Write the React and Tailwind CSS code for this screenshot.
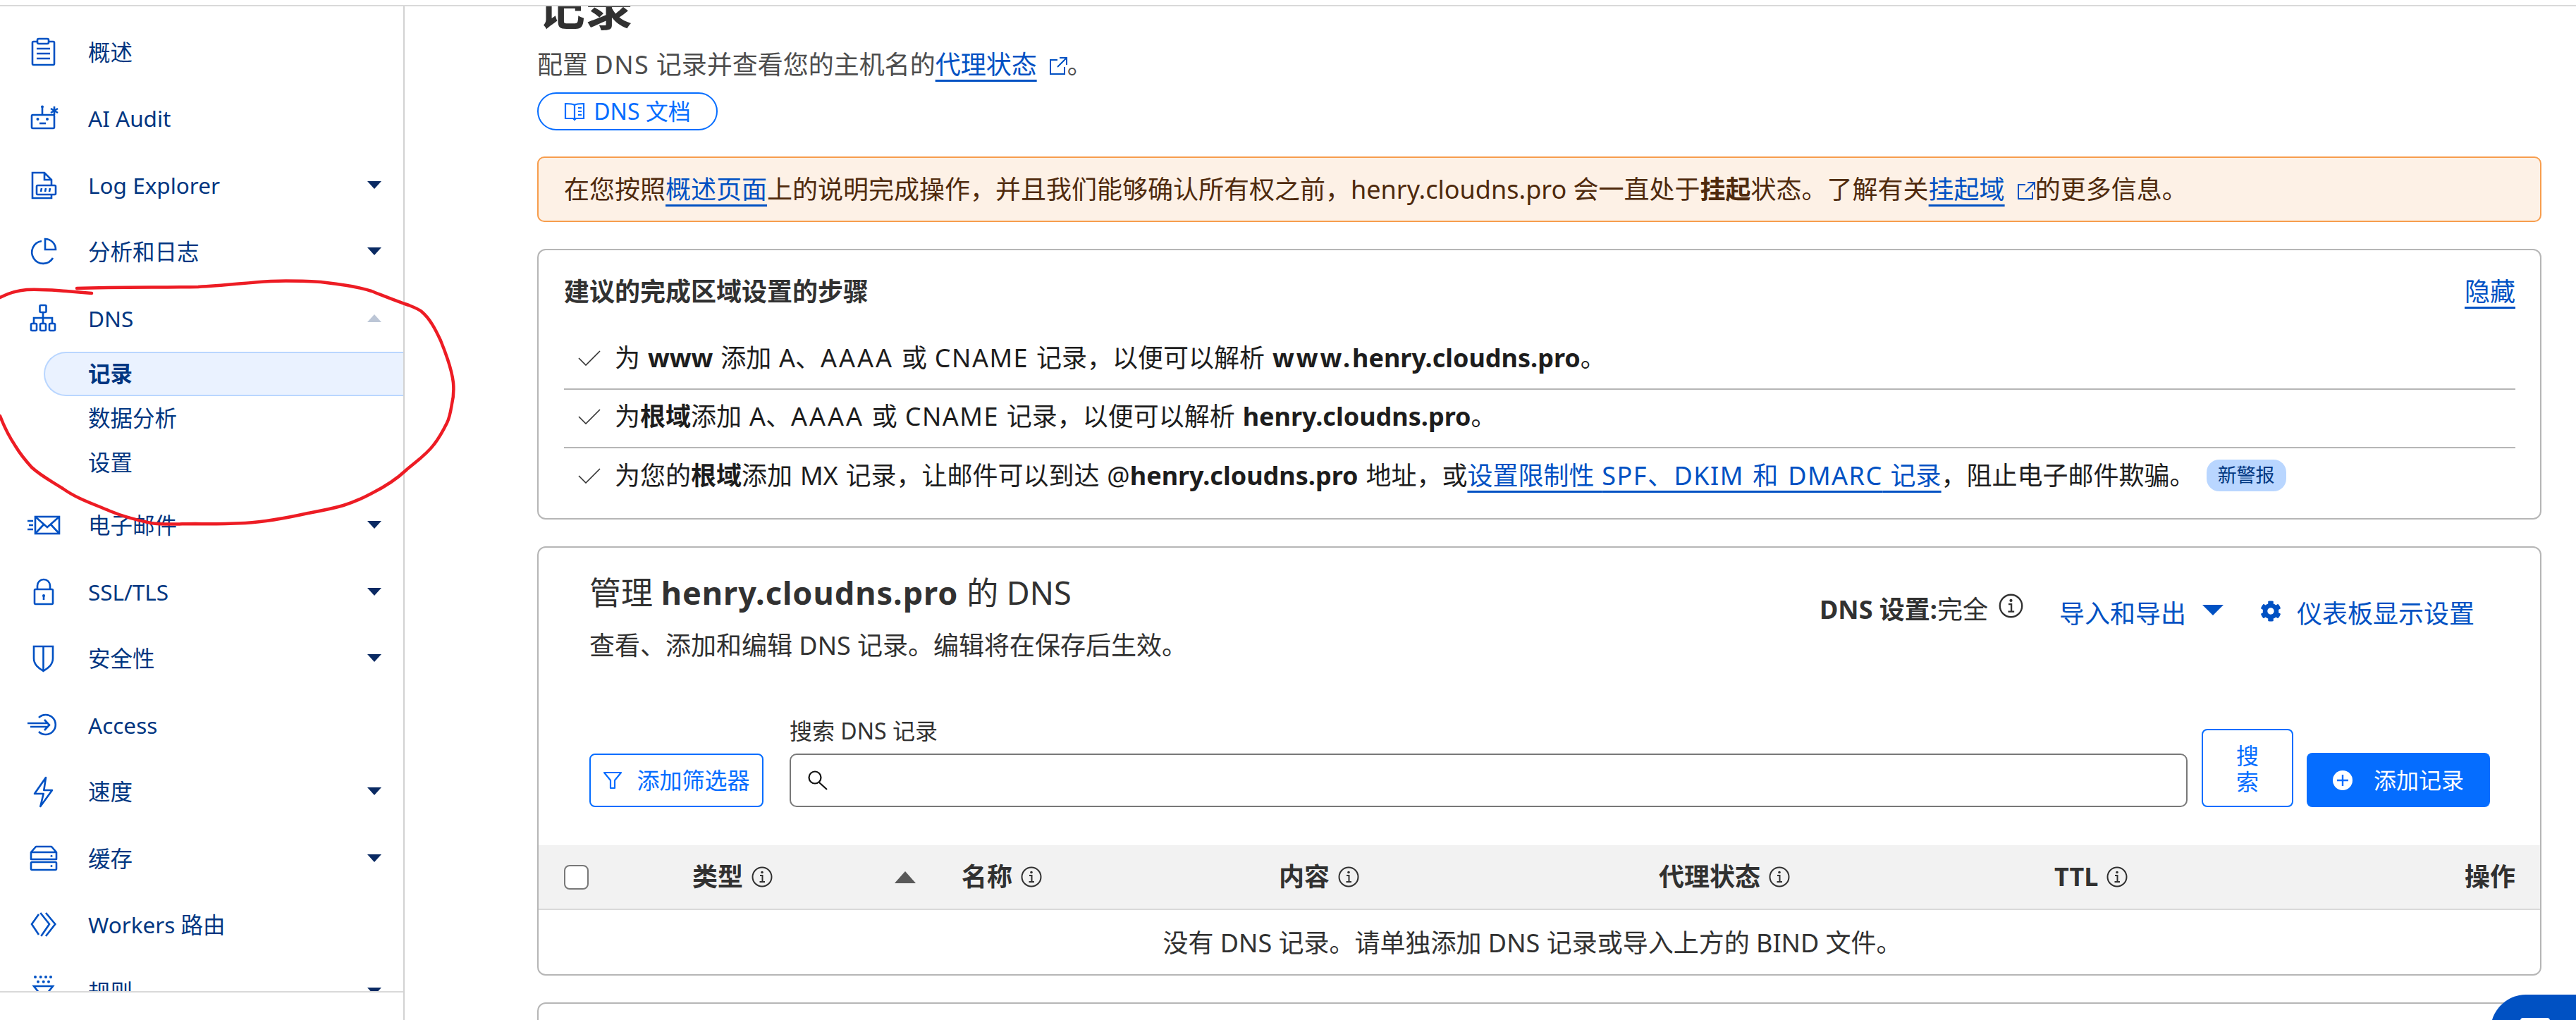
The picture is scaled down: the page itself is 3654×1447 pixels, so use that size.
import { FaCog } from 'react-icons/fa';

const Glyph = ({ children, className = 'w-10 h-10 text-[#0051c3]' }) => (
  <svg viewBox="0 0 40 40" fill="none" stroke="currentColor" strokeWidth="2.6" className={`${className} overflow-visible shrink-0`}>
    {children}
  </svg>
);

const navIcons = {
  overview: (
    <>
      <rect x="5" y="6" width="31" height="33" rx="1.5" />
      <rect x="12" y="2" width="16" height="7" rx="2" fill="#fff" />
      <path d="M11 16H30M11 23H30M11 30H30" />
    </>
  ),
  audit: (
    <>
      <rect x="4" y="15" width="32" height="19" rx="1.5" />
      <path d="M19 15V5" />
      <circle cx="19" cy="3.5" r="2" fill="currentColor" stroke="none" />
      <circle cx="12.5" cy="21" r="2" fill="currentColor" stroke="none" />
      <circle cx="26" cy="21" r="2" fill="currentColor" stroke="none" />
      <path d="M15 27H24" />
      <path d="M36 3V15M31 6L41 12M41 6L31 12" fill="none" />
    </>
  ),
  log: (
    <>
      <path d="M32 21V13L22 3H5V39H32V34M22 3V13H32" />
      <rect x="11" y="21" width="27" height="13" rx="1.5" fill="#fff" />
      <path d="M18 25L17 30M24 25L23 30M30 25L29 30" />
    </>
  ),
  pie: (
    <>
      <path d="M18 5A16 16 0 1 0 34 29" />
      <path d="M23 2A15 15 0 0 1 38 17H23Z" />
    </>
  ),
  dns: (
    <>
      <rect x="15.5" y="2" width="9" height="10" rx="1.5" />
      <path d="M20 12V28M7 28V20H33V28" />
      <rect x="3" y="28" width="8" height="10" rx="1.5" />
      <rect x="16" y="28" width="8" height="10" rx="1.5" />
      <rect x="29" y="28" width="8" height="10" rx="1.5" />
    </>
  ),
  mail: (
    <>
      <rect x="9" y="8" width="34" height="24" />
      <path d="M9 8L26 23L43 8M9 32L21 19M43 32L31 19" />
      <path d="M-2 14H6M0 20H6M-2 26H6" />
    </>
  ),
  lock: (
    <>
      <rect x="8" y="17" width="26" height="21" rx="1.5" />
      <path d="M12 17V12A9 9 0 0 1 30 12V17" />
      <circle cx="21" cy="26" r="2" fill="currentColor" stroke="none" />
      <path d="M21 26V32" />
    </>
  ),
  shield: <path d="M7 3H34V20C34 29 27 34 20.5 38C14 34 7 29 7 20ZM20.5 3V37" />,
  access: (
    <>
      <path d="M14 10A14 14 0 1 1 14 30" />
      <path d="M-2 18H27M2 23H27M22 13L29 20.5L22 28" />
    </>
  ),
  bolt: <path d="M24 0L8 23H20.7L16.3 41L33 18H21.3Z" strokeLinejoin="round" />,
  cache: (
    <>
      <path d="M3 12L10 4H32L39 12V22H3ZM3 12H39" strokeLinejoin="round" />
      <rect x="3" y="26" width="36" height="11" rx="1.5" />
      <circle cx="32" cy="17.3" r="1.5" fill="currentColor" stroke="none" />
      <circle cx="32" cy="31.5" r="1.5" fill="currentColor" stroke="none" />
    </>
  ),
  workers: <path d="M14 5L4 19L14 34M16.3 3L29 19L17.3 36M24 3L37.3 19L24 36" />,
  rules: (
    <>
      <g fill="currentColor" stroke="none">
        <circle cx="9" cy="0" r="2" />
        <circle cx="16.7" cy="0" r="2" />
        <circle cx="24" cy="0" r="2" />
        <circle cx="31" cy="0" r="2" />
        <circle cx="13" cy="6.7" r="2" />
        <circle cx="20.7" cy="6.7" r="2" />
        <circle cx="28" cy="6.7" r="2" />
      </g>
      <path d="M7 13H34L20.5 30Z" />
    </>
  ),
};

const Caret = ({ up }) =>
  up ? (
    <span className="w-0 h-0 border-x-[10px] border-x-transparent border-b-[11px] border-b-[#bcc6d6]" />
  ) : (
    <span className="w-0 h-0 border-x-[10px] border-x-transparent border-t-[11px] border-t-[#0a2a63]" />
  );

const NavItem = ({ icon, label, caret, up }) => (
  <div className="h-[94.5px] shrink-0 flex items-center pl-[41px] pr-[31px] text-[31.5px] text-[#003681]">
    <Glyph>{navIcons[icon]}</Glyph>
    <span className="ml-[44px] flex-1">{label}</span>
    {caret && <Caret up={up} />}
  </div>
);

const A = ({ children }) => (
  <a className="text-[#0051c3] underline decoration-[3px] underline-offset-[8px] [text-decoration-skip-ink:none]">{children}</a>
);

const ExtIcon = () => (
  <svg viewBox="0 0 26 26" fill="none" stroke="#0051c3" strokeWidth="2" className="inline-block w-[26px] h-[26px] mx-[17px] align-[-2px]">
    <path d="M12 4H2V24H22V14M15 1H25V11M25 1L12 14" />
  </svg>
);

const Info = ({ size = 'w-[30px] h-[30px]' }) => (
  <svg viewBox="0 0 30 30" fill="none" stroke="#313131" className={`${size} shrink-0`}>
    <circle cx="15" cy="15" r="13.5" strokeWidth="2" />
    <circle cx="15" cy="8.5" r="1.8" fill="#313131" stroke="none" />
    <path d="M12 13H15.5V22M11.5 22H19" strokeWidth="2" />
  </svg>
);

const Check = () => (
  <svg viewBox="0 0 32 22" fill="none" stroke="#313131" strokeWidth="1.6" className="w-[32px] h-[22px] shrink-0 mr-[20px]">
    <path d="M1 11L11 21L31 1" />
  </svg>
);

const HeadCell = ({ label, children }) => (
  <div className="flex items-center gap-[12px] font-bold">
    {label}
    <Info />
    {children}
  </div>
);

// the A/AAAA/CNAME part is shared by the first two steps
const RecordTypes = () => (
  <>
    添加 A、<span className="tracking-[3px]">AAAA</span> 或 <span className="tracking-[1.5px]">CNAME</span> 记录，以便可以解析
  </>
);

export default function App() {
  return (
    <div className="relative h-screen w-full overflow-hidden bg-white flex flex-col font-['Noto_Sans','Noto_Sans_CJK_SC',sans-serif]">
      <div className="h-[9px] shrink-0 border-b-2 border-[#d9d9d9] bg-white z-10" />
      <div className="flex-1 flex min-h-0">
        <aside className="w-[574px] shrink-0 border-r-2 border-[#d2d2d2] flex flex-col">
          <nav className="flex-1 min-h-0 overflow-hidden pt-[17px] flex flex-col">
            <NavItem icon="overview" label="概述" />
            <NavItem icon="audit" label="AI Audit" />
            <NavItem icon="log" label="Log Explorer" caret />
            <NavItem icon="pie" label="分析和日志" caret />
            <NavItem icon="dns" label="DNS" caret up />
            <div className="shrink-0 pb-[10px] text-[31.5px] text-[#003681]">
              <div className="h-[63px] ml-[62px] pl-[61px] flex items-center rounded-l-full border-2 border-r-0 border-[#b9d6ff] bg-[#eaf2ff] font-bold">记录</div>
              <div className="h-[63px] pl-[125px] flex items-center">数据分析</div>
              <div className="h-[63px] pl-[125px] flex items-center">设置</div>
            </div>
            <NavItem icon="mail" label="电子邮件" caret />
            <NavItem icon="lock" label="SSL/TLS" caret />
            <NavItem icon="shield" label="安全性" caret />
            <NavItem icon="access" label="Access" />
            <NavItem icon="bolt" label="速度" caret />
            <NavItem icon="cache" label="缓存" caret />
            <NavItem icon="workers" label="Workers 路由" />
            <NavItem icon="rules" label="规则" caret />
          </nav>
          <div className="h-[41px] shrink-0 border-t-2 border-[#d9d9d9]" />
        </aside>

        <main className="flex-1 min-w-0 overflow-hidden pl-[188px] pr-[49px] text-[36px] text-[#313131]">
          <h1 className="mt-[-33px] h-[68px] text-[68px] leading-[68px] font-bold">记录</h1>
          <p className="mt-[25px] h-[46px] leading-[46px] text-[#4d4d4d]">
            配置 <span className="tracking-[1.5px]">DNS</span> 记录并查看您的主机名的<A>代理状态</A>
            <ExtIcon />
            <span className="ml-[-17px]">。</span>
          </p>
          <button className="mt-[16px] h-[54px] w-[256px] rounded-full border-2 border-[#056dff] flex items-center justify-center gap-[12px] text-[32px] text-[#056dff]">
            <svg viewBox="0 0 30 27" fill="none" stroke="#056dff" strokeWidth="2.2" className="w-[30px] h-[27px]">
              <path d="M15 4C12 2 6 2 2 2V23H13L15 25L17 23H28V2C24 2 18 2 15 4ZM15 4V25M20 8H25M20 13H25M20 18H25" />
            </svg>
            DNS 文档
          </button>

          <div className="mt-[37px] h-[93px] rounded-[10px] border-2 border-[#f79d4d] bg-[#fdf1e6] pl-[36px] flex items-center text-[#4f2a0d]">
            <p className="whitespace-nowrap">
              在您按照<A>概述页面</A>上的说明完成操作，并且我们能够确认所有权之前，henry.cloudns.pro 会一直处于<b>挂起</b>状态。了解有关<A>挂起域</A>
              <ExtIcon />
              <span className="ml-[-17px]">的更多信息。</span>
            </p>
          </div>

          <section className="mt-[38px] h-[384px] rounded-[12px] border-2 border-[#b6b6b6] pl-[36px] pr-[35px] pt-[29px]">
            <div className="h-[60px] flex items-center justify-between">
              <h2 className="font-bold">建议的完成区域设置的步骤</h2>
              <A>隐藏</A>
            </div>
            <div className="mt-[26px] text-[#1d1d1d] [word-spacing:1.5px]">
              <div className="h-[83px] border-b-2 border-[#b6b6b6] pl-[20px] pb-[6px] flex items-center whitespace-nowrap">
                <Check />
                <span>为 <b>www</b> <RecordTypes /> <b><span className="tracking-[3px]">www.</span>henry.cloudns.pro</b>。</span>
              </div>
              <div className="h-[83px] border-b-2 border-[#b6b6b6] pl-[20px] pb-[6px] flex items-center whitespace-nowrap">
                <Check />
                <span>为<b>根域</b><RecordTypes /> <b>henry.cloudns.pro</b>。</span>
              </div>
              <div className="h-[83px] pl-[20px] pb-[6px] flex items-center whitespace-nowrap">
                <Check />
                <span>为您的<b>根域</b>添加 MX 记录，让邮件可以到达 @<b>henry.cloudns.pro</b> 地址，或<A>设置限制性 <span className="tracking-[1.5px]">SPF、DKIM 和 DMARC</span> 记录</A>，阻止电子邮件欺骗。</span>
                <span className="ml-[16px] h-[45px] w-[113px] rounded-[18px] bg-[#b9d6ff] flex items-center justify-center text-[27px] text-[#003681]">新警报</span>
              </div>
            </div>
          </section>

          <section className="mt-[38px] h-[609px] rounded-[12px] border-2 border-[#b6b6b6] flex flex-col">
            <div className="pl-[72px] pr-[93px] pt-[36px] flex justify-between items-start">
              <div>
                <h2 className="h-[56px] leading-[56px] text-[45px]">管理 <b className="tracking-[1px]">henry.cloudns.pro</b> 的 DNS</h2>
                <p className="mt-[24px] h-[46px] leading-[46px]">查看、添加和编辑 DNS 记录。编辑将在保存后生效。</p>
              </div>
              <div className="flex items-center pt-[19px]">
                <span className="font-bold">DNS 设置:</span>
                <span>完全</span>
                <span className="ml-[15px] mt-[-12px]"><Info size="w-[35px] h-[35px]" /></span>
                <span className="ml-[51px] text-[#0051c3] mt-[12px]">导入和导出</span>
                <span className="ml-[23px] w-0 h-0 border-x-[15px] border-x-transparent border-t-[15px] border-t-[#0051c3]" />
                <FaCog className="ml-[52px] mt-[4px] w-[30px] h-[30px] text-[#0051c3]" />
                <span className="ml-[22px] text-[#0051c3] mt-[12px]">仪表板显示设置</span>
              </div>
            </div>

            <div className="mt-[78px] pl-[72px] pr-[71px] flex items-end text-[32px]">
              <button className="h-[76px] w-[247px] shrink-0 rounded-[8px] border-2 border-[#056dff] text-[#056dff] flex items-center justify-center gap-[20px]">
                <svg viewBox="0 0 28 26" fill="none" stroke="#056dff" strokeWidth="2.2" className="w-[28px] h-[26px]">
                  <path d="M2 2H26L17 13V24H11V13Z" strokeLinejoin="round" />
                </svg>
                添加筛选器
              </button>
              <div className="ml-[37px] flex-1 min-w-0">
                <label className="block mb-[12px] h-[40px] leading-[40px]">搜索 DNS 记录</label>
                <div className="h-[76px] rounded-[10px] border-2 border-[#787878] flex items-center pl-[24px]">
                  <svg viewBox="0 0 30 28" fill="none" stroke="#111" strokeWidth="2.2" className="w-[30px] h-[28px]">
                    <circle cx="10" cy="10" r="8.5" />
                    <path d="M16 17L27 27" />
                  </svg>
                </div>
              </div>
              <button className="ml-[20px] h-[111px] w-[130px] shrink-0 rounded-[8px] border-2 border-[#056dff] text-[#056dff] leading-[37px] px-[40px]">搜索</button>
              <button className="ml-[19px] h-[77px] w-[260px] shrink-0 rounded-[8px] bg-[#056dff] text-white flex items-center justify-center gap-[30px]">
                <svg viewBox="0 0 28 28" className="w-[28px] h-[28px]">
                  <circle cx="14" cy="14" r="14" fill="#fff" />
                  <path d="M14 6V22M6 14H22" stroke="#056dff" strokeWidth="2.4" />
                </svg>
                添加记录
              </button>
            </div>

            <div className="mt-[54px] h-[92px] shrink-0 border-b-2 border-[#d9d9d9] bg-[#f2f2f2] pl-[36px] pr-[35px] grid grid-cols-[182px_382px_450px_539px_561px_1fr_auto] items-center">
              <span className="h-[35px] w-[35px] rounded-[8px] border-2 border-[#787878] bg-white" />
              <div className="flex items-center pr-[65px] justify-between">
                <HeadCell label="类型" />
                <span className="w-0 h-0 border-x-[15px] border-x-transparent border-b-[17px] border-b-[#595959]" />
              </div>
              <HeadCell label="名称" />
              <HeadCell label="内容" />
              <HeadCell label="代理状态" />
              <HeadCell label="TTL" />
              <span className="font-bold">操作</span>
            </div>
            <div className="flex-1 flex items-center justify-center pr-[20px] pt-[2px]">没有 DNS 记录。请单独添加 DNS 记录或导入上方的 BIND 文件。</div>
          </section>

          <section className="mt-[38px] h-[100px] rounded-t-[12px] border-2 border-[#b6b6b6]" />
        </main>
      </div>

      {/* floating chat button, cut off by the window */}
      <div className="absolute right-[-40px] bottom-[-64px] h-[100px] w-[161px] rounded-l-full bg-[#0051c3]">
        <span className="absolute left-[42px] top-[33px] h-[8px] w-[42px] rounded-t-[4px] bg-white" />
      </div>

      {/* red marker circled around the DNS group */}
      <svg viewBox="0 0 3654 1447" fill="none" stroke="#ed1c24" strokeWidth="4.5" strokeLinecap="round" strokeLinejoin="round" className="absolute inset-0 w-full h-full pointer-events-none">
        <path d="M0 422C12 416 24 412 38 411C60 410 78 412 94 413L130 416" />
        <path d="M109 409C170 407 230 408 281 407C320 405 350 401 384 399C410 398 435 399 455 400C480 403 505 406 527 413C545 420 562 427 580 433C590 437 595 439 598 442C610 452 618 468 625 483C634 505 641 525 643 543C644 555 643 565 641 573C639 585 638 592 634 600C628 612 623 621 616 630C605 645 590 655 576 667C560 682 543 692 527 700C512 708 500 713 487 717C470 722 453 725 437 728C410 734 380 740 348 742C325 743 300 744 277 743C255 743 235 745 214 742C195 738 175 733 156 725C133 715 110 708 89 693C72 682 58 675 45 663C35 652 28 643 22 633C12 618 5 603 0 590" />
      </svg>
    </div>
  );
}
